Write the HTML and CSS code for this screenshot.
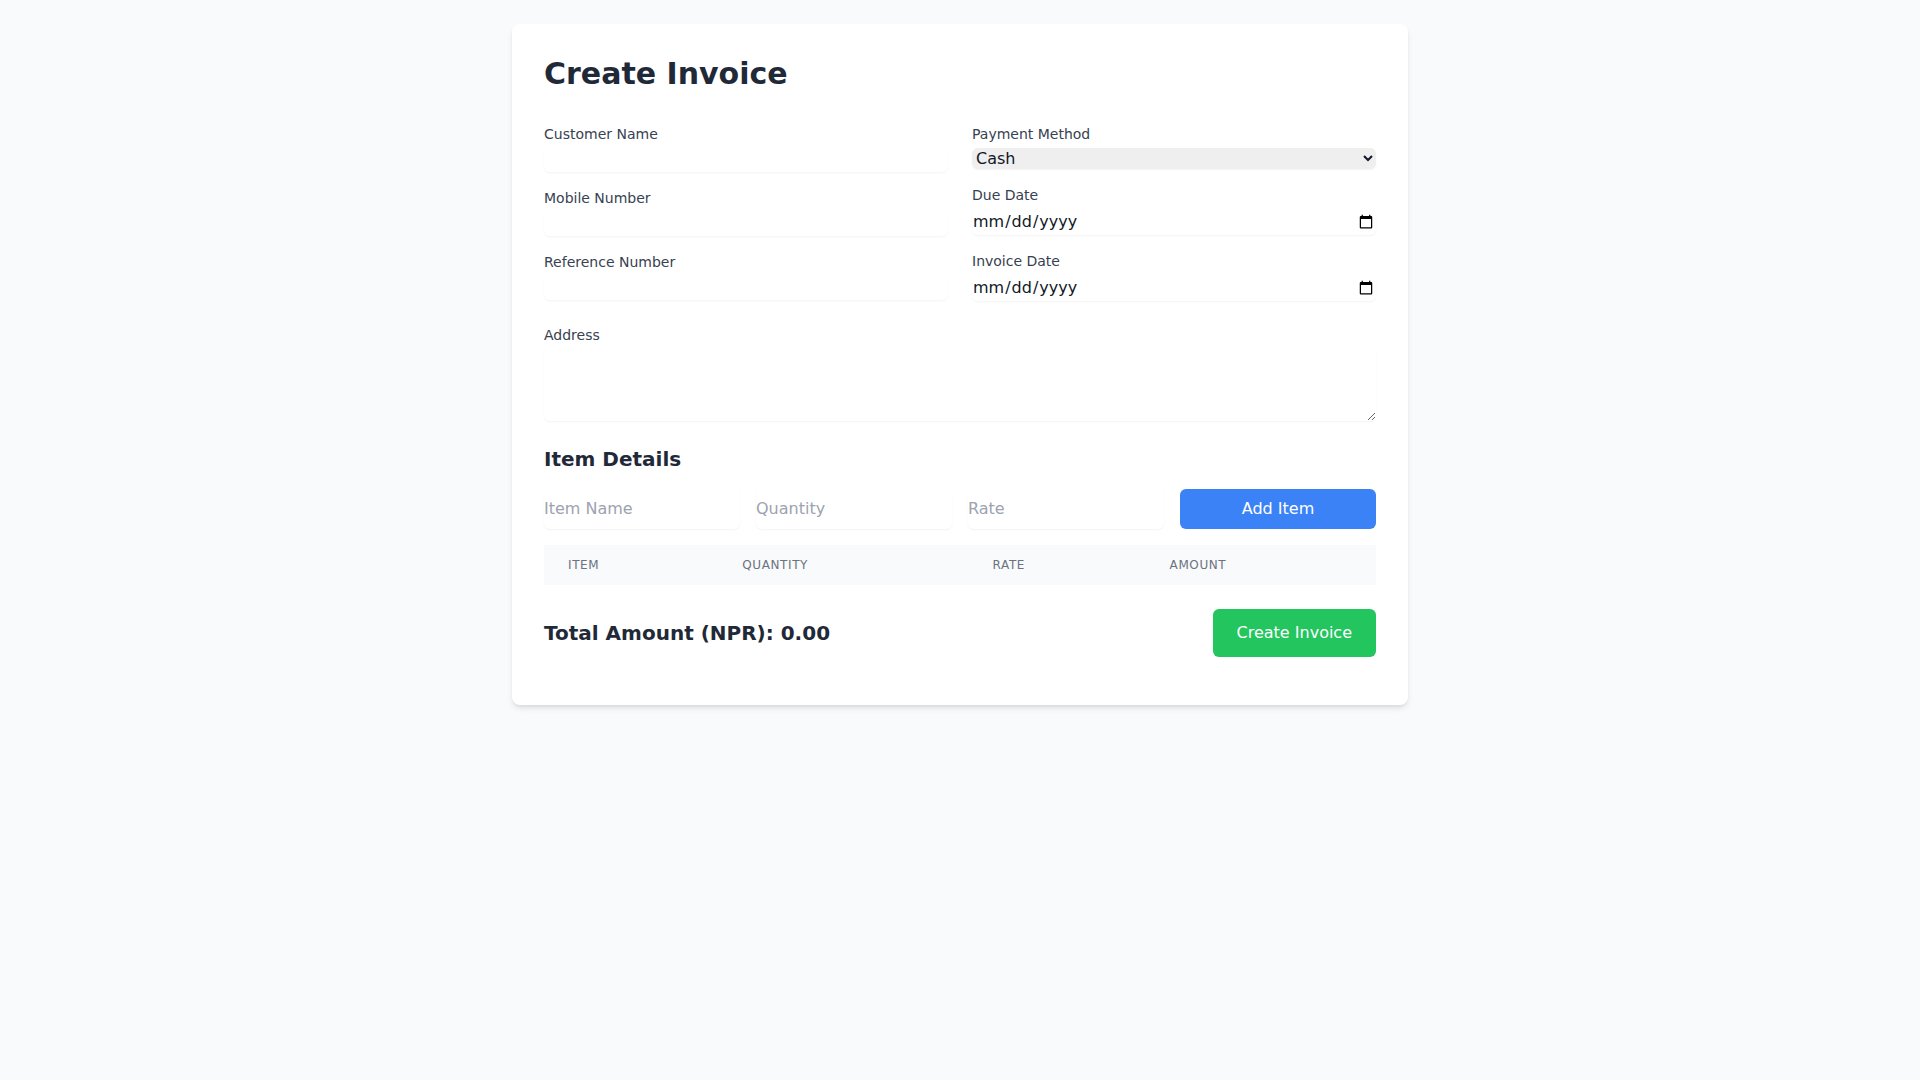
FILE: index.html
```html
<!DOCTYPE html>
<html lang="en">
<head>
  <meta charset="UTF-8">
  <meta name="viewport" content="width=device-width, initial-scale=1.0">
  <title>Create Invoice</title>
  <link rel="stylesheet" href="styles.css">
</head>
<body>
  <div class="page">
    <div class="card">
      <h1>Create Invoice</h1>
      <form class="invoice-form">
        <div class="fields">
          <div class="column">
            <div class="field">
              <label for="customerName">Customer Name</label>
              <input type="text" id="customerName">
            </div>
            <div class="field">
              <label for="mobile">Mobile Number</label>
              <input type="text" id="mobile">
            </div>
            <div class="field">
              <label for="reference">Reference Number</label>
              <input type="text" id="reference">
            </div>
          </div>
          <div class="column">
            <div class="field">
              <label for="payment">Payment Method</label>
              <select id="payment">
                <option>Cash</option>
                <option>Card</option>
                <option>Bank Transfer</option>
              </select>
            </div>
            <div class="field">
              <label for="dueDate">Due Date</label>
              <input type="date" id="dueDate">
            </div>
            <div class="field">
              <label for="invoiceDate">Invoice Date</label>
              <input type="date" id="invoiceDate">
            </div>
          </div>
        </div>

        <div class="field">
          <label for="address">Address</label>
          <textarea id="address" rows="3"></textarea>
        </div>

        <div class="items">
          <h2>Item Details</h2>
          <div class="item-row">
            <input type="text" class="item-input" placeholder="Item Name">
            <input type="number" class="item-input" placeholder="Quantity">
            <input type="number" class="item-input" placeholder="Rate">
            <button type="button" class="btn btn-blue">Add Item</button>
          </div>
          <table class="item-table">
            <thead>
              <tr>
                <th>Item</th>
                <th>Quantity</th>
                <th>Rate</th>
                <th>Amount</th>
              </tr>
            </thead>
            <tbody></tbody>
          </table>
        </div>

        <div class="footer">
          <div class="total">Total Amount (NPR): <span id="total">0.00</span></div>
          <button type="submit" class="btn btn-green">Create Invoice</button>
        </div>
      </form>
    </div>
  </div>
</body>
</html>
```

FILE: styles.css
```css
*,
*::before,
*::after {
  box-sizing: border-box;
  border-width: 0;
  border-style: solid;
  border-color: #e5e7eb;
}

body {
  margin: 0;
  font-family: 'DejaVu Sans', sans-serif;
  line-height: 1.5;
  background: #f9fafb;
  color: #111827;
}

input,
select,
textarea,
button {
  font-family: inherit;
  font-size: 100%;
  line-height: inherit;
  color: inherit;
  margin: 0;
  padding: 0;
}

textarea {
  resize: vertical;
}

.page {
  padding: 24px 16px;
}

.card {
  max-width: 896px;
  margin: 0 auto;
  background: #fff;
  padding: 32px;
  border-radius: 8px;
  box-shadow: 0 4px 6px -1px rgba(0, 0, 0, 0.1), 0 2px 4px -2px rgba(0, 0, 0, 0.1);
}

h1 {
  margin: 0 0 32px;
  font-size: 30px;
  line-height: 36px;
  font-weight: bold;
  color: #1f2937;
}

.invoice-form {
  display: flex;
  flex-direction: column;
  gap: 24px;
}

.fields {
  display: grid;
  grid-template-columns: 1fr 1fr;
  gap: 24px;
}

.column {
  display: flex;
  flex-direction: column;
  gap: 16px;
}

.field label {
  display: block;
  font-size: 14px;
  line-height: 20px;
  font-weight: normal;
  color: #374151;
}

.field input,
.field select,
.field textarea {
  display: block;
  width: 100%;
  margin-top: 4px;
  border-radius: 6px;
  box-shadow: 0 1px 2px 0 rgba(0, 0, 0, 0.05);
}

.field select {
  background-color: #efefef;
}

.items h2 {
  margin: 0 0 16px;
  font-size: 20px;
  line-height: 28px;
  font-weight: bold;
  color: #1f2937;
}

.item-row {
  display: grid;
  grid-template-columns: repeat(4, 1fr);
  gap: 16px;
  margin-bottom: 16px;
}

.item-input {
  width: 100%;
  padding: 8px 0;
  border-radius: 6px;
  box-shadow: 0 1px 2px 0 rgba(0, 0, 0, 0.05);
}

.item-input::placeholder {
  color: #9ca3af;
}

.btn {
  color: #fff;
  border-radius: 6px;
  cursor: pointer;
}

.btn-blue {
  background: #3b82f6;
  padding: 8px 16px;
}

.btn-green {
  background: #22c55e;
  padding: 12px 24px;
}

.item-table {
  width: 100%;
  border-collapse: collapse;
}

.item-table thead {
  background: #f9fafb;
}

.item-table th {
  padding: 12px 24px;
  text-align: left;
  font-size: 12px;
  line-height: 16px;
  font-weight: normal;
  color: #6b7280;
  text-transform: uppercase;
  letter-spacing: 0.05em;
}

.footer {
  display: flex;
  justify-content: space-between;
  align-items: center;
  margin-bottom: 16px;
}

.total {
  font-size: 20px;
  line-height: 28px;
  font-weight: bold;
  color: #1f2937;
}
```
